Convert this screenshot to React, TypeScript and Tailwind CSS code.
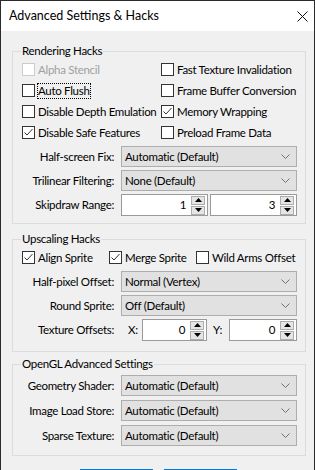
import React from "react";

const font = { fontFamily: "Lato, 'Noto Sans', sans-serif" };

function Check({
  label,
  checked = false,
  disabled = false,
  focus = false,
}: {
  label: string;
  checked?: boolean;
  disabled?: boolean;
  focus?: boolean;
}) {
  return (
    <div className="flex items-center h-[21px]">
      <div
        className={`w-[13px] h-[13px] border bg-white flex items-center justify-center flex-shrink-0 ${
          disabled ? "border-[#cccccc]" : "border-[#333333]"
        }`}
      >
        {checked && (
          <svg width="11" height="11" viewBox="0 0 11 11">
            <polyline points="1.5,5.5 4,8 9.5,2" fill="none" stroke="#333" strokeWidth="1" />
          </svg>
        )}
      </div>
      <span
        className={`ml-[3px] leading-[14px] whitespace-nowrap ${
          disabled ? "text-[#a0a0a0]" : "text-black"
        } ${focus ? "outline outline-1 outline-dotted outline-black" : ""}`}
      >
        {label}
      </span>
    </div>
  );
}

function Combo({ value }: { value: string }) {
  return (
    <div className="h-[21px] border border-[#adadad] bg-[#e1e1e1] flex items-center justify-between pl-[3px] pr-[6px]">
      <span className="whitespace-nowrap">{value}</span>
      <svg width="9" height="5" viewBox="0 0 9 5">
        <polyline points="0.5,0.5 4.5,4.5 8.5,0.5" fill="none" stroke="#707070" strokeWidth="1" />
      </svg>
    </div>
  );
}

function Spin({ value }: { value: string }) {
  return (
    <div className="h-[22px] border border-[#9a9a9a] bg-white flex items-center flex-1 min-w-0">
      <span className="flex-1 text-right pr-[5px]">{value}</span>
      <div className="flex flex-col gap-[1px] mr-[2px]">
        <div className="w-[14px] h-[9px] border border-[#adadad] bg-[#e5e5e5] flex items-center justify-center">
          <svg width="7" height="4" viewBox="0 0 7 4">
            <polygon points="3.5,0 7,4 0,4" fill="#000" />
          </svg>
        </div>
        <div className="w-[14px] h-[9px] border border-[#adadad] bg-[#e5e5e5] flex items-center justify-center">
          <svg width="7" height="4" viewBox="0 0 7 4">
            <polygon points="0,0 7,0 3.5,4" fill="#000" />
          </svg>
        </div>
      </div>
    </div>
  );
}

function Label({ text }: { text: string }) {
  return <div className="text-right whitespace-nowrap">{text}</div>;
}

export default function App() {
  return (
    <div
      style={font}
      className="w-[315px] h-[470px] overflow-hidden border-l border-r border-t border-[#2b2b2b] bg-[#f0f0f0] text-[11.5px] tracking-[-0.3px] text-black"
    >
      {/* Title bar */}
      <div className="h-[30px] bg-white flex items-center justify-between pl-[8px] pr-[6px]">
        <span className="text-[12.5px] tracking-[0px]">Advanced Settings &amp; Hacks</span>
        <svg width="11" height="11" viewBox="0 0 11 11">
          <path d="M0.5 0.5 L10.5 10.5 M10.5 0.5 L0.5 10.5" stroke="#111" strokeWidth="1" />
        </svg>
      </div>

      {/* Rendering Hacks */}
      <fieldset className="ml-[11px] mr-[8px] mt-[12px] border border-[#dcdcdc] px-[8px] pt-0 pb-[7px]">
        <legend className="px-[1px] leading-[16px]">Rendering Hacks</legend>
        <div className="grid grid-cols-[139px_1fr] pl-[1px]">
          <Check label="Alpha Stencil" disabled />
          <Check label="Fast Texture Invalidation" />
          <Check label="Auto Flush" focus />
          <Check label="Frame Buffer Conversion" />
          <Check label="Disable Depth Emulation" />
          <Check label="Memory Wrapping" checked />
          <Check label="Disable Safe Features" checked />
          <Check label="Preload Frame Data" />
        </div>
        <div className="grid grid-cols-[93px_1fr] gap-x-[7px] gap-y-[3px] items-center mt-[3px]">
          <Label text="Half-screen Fix:" />
          <Combo value="Automatic (Default)" />
          <Label text="Trilinear Filtering:" />
          <Combo value="None (Default)" />
          <Label text="Skipdraw Range:" />
          <div className="flex gap-[2px]">
            <Spin value="1" />
            <Spin value="3" />
          </div>
        </div>
      </fieldset>

      {/* Upscaling Hacks */}
      <fieldset className="ml-[11px] mr-[8px] mt-[7px] border border-[#dcdcdc] px-[8px] pt-0 pb-[10px]">
        <legend className="px-[1px] leading-[16px]">Upscaling Hacks</legend>
        <div className="flex pl-[1px]">
          <div className="w-[87px]">
            <Check label="Align Sprite" checked />
          </div>
          <div className="w-[87px]">
            <Check label="Merge Sprite" checked />
          </div>
          <Check label="Wild Arms Offset" />
        </div>
        <div className="grid grid-cols-[93px_1fr] gap-x-[7px] gap-y-[3px] items-center mt-[3px]">
          <Label text="Half-pixel Offset:" />
          <Combo value="Normal (Vertex)" />
          <Label text="Round Sprite:" />
          <Combo value="Off (Default)" />
          <Label text="Texture Offsets:" />
          <div className="grid grid-cols-[21px_65px_22px_1fr] items-center">
            <span className="pl-[7px]">X:</span>
            <Spin value="0" />
            <span className="pl-[6px]">Y:</span>
            <Spin value="0" />
          </div>
        </div>
      </fieldset>

      {/* OpenGL Advanced Settings */}
      <fieldset className="ml-[11px] mr-[8px] mt-[4px] border border-[#dcdcdc] px-[8px] pt-[3px] pb-[9px]">
        <legend className="px-[1px] leading-[16px]">OpenGL Advanced Settings</legend>
        <div className="grid grid-cols-[93px_1fr] gap-x-[7px] gap-y-[4px] items-center">
          <Label text="Geometry Shader:" />
          <Combo value="Automatic (Default)" />
          <Label text="Image Load Store:" />
          <Combo value="Automatic (Default)" />
          <Label text="Sparse Texture:" />
          <Combo value="Automatic (Default)" />
        </div>
      </fieldset>

      {/* Dialog buttons */}
      <div className="flex gap-[11px] pl-[79px] mt-[13px]">
        <div className="w-[73px] h-[23px] border-2 border-[#0078d7] bg-[#e1e1e1]" />
        <div className="w-[73px] h-[23px] border border-[#0078d7] bg-[#e1e1e1]" />
      </div>
    </div>
  );
}
